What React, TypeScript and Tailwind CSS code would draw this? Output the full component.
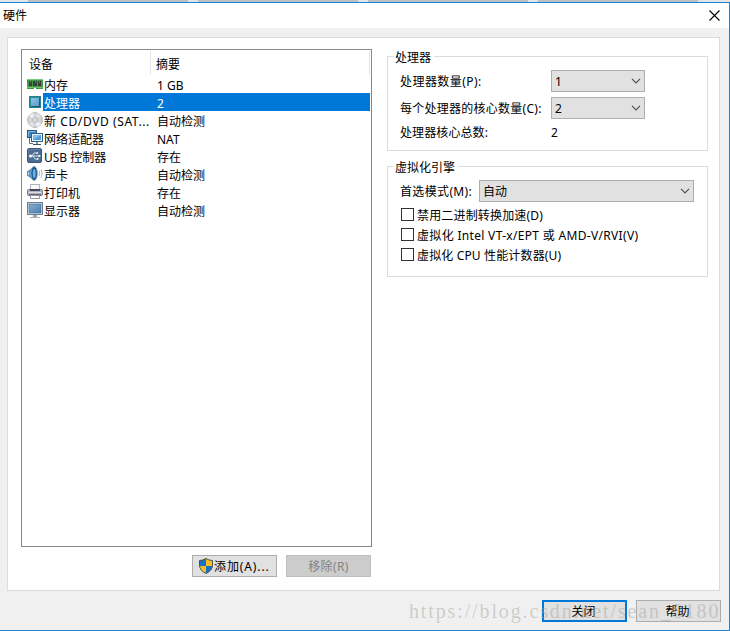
import { useState, type ReactNode } from 'react';

type Device = { name: string; summary: string; icon: ReactNode; className?: string };

// ─── Device icons ───────────────────────────────────────
const MemoryIcon = () => (
  <svg width="16" height="16" viewBox="0 0 16 16" shapeRendering="crispEdges">
    <rect x="0" y="3" width="16" height="10" fill="#3f9a45" />
    <rect x="0" y="3" width="16" height="1" fill="#7cc77f" />
    <rect x="2" y="5" width="3" height="5" fill="#33413a" />
    <rect x="6" y="5" width="4" height="5" fill="#33413a" />
    <rect x="11" y="5" width="3" height="5" fill="#33413a" />
    <path d="M3.500 5v2M8.500 5v2M12.500 5v2" stroke="#66756c" strokeWidth="1" />
    <rect x="0" y="11" width="16" height="1" fill="#7cbf70" />
    <rect x="7" y="12" width="2" height="1" fill="#ffffff" />
  </svg>
);

const CpuIcon = () => (
  <svg width="16" height="16" viewBox="0 0 16 16">
    <defs>
      <linearGradient id="cpu" x2="1" y2="1">
        <stop stopColor="#8fc4ea" />
        <stop offset="1" stopColor="#569dcc" />
      </linearGradient>
    </defs>
    <rect x="2" y="2" width="12" height="12" fill="#2b8a98" />
    <rect x="2.500" y="2.500" width="11" height="11" fill="none" stroke="#217989" strokeDasharray="1 1" />
    <rect x="4" y="4" width="8" height="8" fill="url(#cpu)" />
    <path d="M4 12.500h8.500V4" fill="none" stroke="#175d73" />
  </svg>
);

const DiscIcon = () => (
  <svg width="16" height="16" viewBox="0 0 16 16">
    <circle cx="8" cy="8" r="7.400" fill="#d5d6d9" stroke="#a4a6aa" strokeWidth=".8" />
    <path d="M8 8 2 4a7 7 0 0 1 4-3zM8 8l6 4a7 7 0 0 1-4 3z" fill="#eff0f1" />
    <path d="M8 8 10 1a7 7 0 0 1 4 3zM8 8l-2 7a7 7 0 0 1-4-3z" fill="#dfe0e2" />
    <circle cx="8" cy="8" r="2.700" fill="#eceeef" stroke="#a9acb1" strokeWidth=".8" />
    <circle cx="8" cy="8" r="1.200" fill="#fff" stroke="#8d9197" strokeWidth=".5" />
  </svg>
);

const NetworkIcon = () => (
  <svg width="16" height="16" viewBox="0 0 16 16">
    <path d="M2.500 8v5.500H6" fill="none" stroke="#5c6c7a" />
    <rect x=".5" y=".5" width="9" height="7" fill="#4285bd" stroke="#28577f" />
    <path d="M1.500 6.500v-5h7" fill="none" stroke="#7ebae3" />
    <rect x="4.500" y="3.500" width="11" height="8" fill="#e4f1fb" stroke="#2f5f8b" />
    <rect x="6" y="5" width="8" height="5" fill="#4f9bd8" />
    <path d="M6 10V5h8z" fill="#82bbe6" />
    <path d="M10 12v2M6 14.500h8" stroke="#384d60" strokeWidth="1.200" />
  </svg>
);

const UsbIcon = () => (
  <svg width="16" height="16" viewBox="0 0 16 16">
    <rect x=".5" y=".5" width="14" height="14" rx="1.500" fill="#4c6d91" stroke="#395879" />
    <path d="M1.500 7V1.500h12" fill="none" stroke="#627f9f" />
    <path d="M3 8h9M5 8l2-3h3M6 8l2 3h3" fill="none" stroke="#e9eff5" strokeWidth=".9" />
    <circle cx="3.500" cy="8" r="1.500" fill="#fff" />
    <path d="M11.500 6.500v3L14 8zM9.500 4.200H11v1.500H9.500zM10 10.200h1.500v1.500H10z" fill="#fff" />
  </svg>
);

const SoundIcon = () => (
  <svg width="16" height="16" viewBox="0 0 16 16">
    <path d="M.5 5.500 3 4l4-3.500v14L3 11 .5 9.500z" fill="#5e95c3" stroke="#356690" strokeWidth=".7" />
    <ellipse cx="7.200" cy="7.500" rx="3.200" ry="7" fill="#1b5288" stroke="#8babc6" strokeWidth=".8" />
    <ellipse cx="7.200" cy="7.500" rx="1.500" ry="4.500" fill="#63b6e6" />
    <path d="M1.500 6v3" stroke="#b2d8f1" />
    <path d="M12 5q1.500 2.500 0 5M14 3.500q2.200 4 0 8" fill="none" stroke="#a4b7c6" />
  </svg>
);

const PrinterIcon = () => (
  <svg width="16" height="16" viewBox="0 0 16 16">
    <rect x="3.500" y=".5" width="9" height="7" fill="#f8f9fb" stroke="#b0b4bd" />
    <rect x=".5" y="5.500" width="15" height="6" rx="1" fill="#b0b2bf" stroke="#74778a" />
    <path d="M3 5h10v2H3z" fill="#45495b" />
    <path d="M1.500 8.500h13" stroke="#d9dae1" />
    <path d="M2 10.500h12" stroke="#62657a" />
    <path d="M3.500 11.500h9v3h-9z" fill="#fff" stroke="#9396a3" />
  </svg>
);

const DisplayIcon = () => (
  <svg width="16" height="16" viewBox="0 0 16 16">
    <defs>
      <linearGradient id="screen" x2="1" y2="1">
        <stop stopColor="#88adcd" />
        <stop offset="1" stopColor="#4c7faf" />
      </linearGradient>
    </defs>
    <rect x=".5" y=".5" width="15" height="12" fill="#dce5ee" stroke="#6b8196" />
    <rect x="2" y="2" width="12" height="9" fill="url(#screen)" stroke="#426b91" strokeWidth=".6" />
    <path d="M6 13h4v2H6z" fill="#94a2ae" />
    <path d="M3 15.500h10" stroke="#a8b3bc" />
  </svg>
);

const ShieldIcon = () => (
  <svg width="16" height="16" viewBox="0 0 16 16" className="shrink-0">
    <path d="M8 .5Q5 2.500 1.500 2.500V7q0 5.500 6.500 8.500 6.500-3 6.500-8.500V2.500Q11 2.500 8 .5z" fill="#fbbc22" />
    <path d="M8 .5Q5 2.500 1.500 2.500V8H8zM8 8h6.400Q13.500 13 8 15.500z" fill="#1672c9" />
    <path d="M8 .5Q5 2.500 1.500 2.500V7q0 5.500 6.500 8.500 6.500-3 6.500-8.500V2.500Q11 2.500 8 .5z" fill="none" stroke="#4a5055" />
  </svg>
);

const Chevron = () => (
  <svg width="10" height="6" viewBox="0 0 10 6" className="mr-[3px] shrink-0">
    <path d="m1 .8 4 4 4-4" fill="none" stroke="#505050" strokeWidth="1.200" />
  </svg>
);

const DEVICES: Device[] = [
  { name: '内存', summary: '1 GB', icon: <MemoryIcon /> },
  { name: '处理器', summary: '2', icon: <CpuIcon /> },
  { name: '新 CD/DVD (SAT...', summary: '自动检测', icon: <DiscIcon />, className: 'tracking-[0.6px]' },
  { name: '网络适配器', summary: 'NAT', icon: <NetworkIcon /> },
  { name: 'USB 控制器', summary: '存在', icon: <UsbIcon /> },
  { name: '声卡', summary: '自动检测', icon: <SoundIcon /> },
  { name: '打印机', summary: '存在', icon: <PrinterIcon /> },
  { name: '显示器', summary: '自动检测', icon: <DisplayIcon /> },
];

const OPTIONS = [
  { label: '禁用二进制转换加速(D)', className: 'tracking-[0.17px]' },
  { label: '虚拟化 Intel VT-x/EPT 或 AMD-V/RVI(V)', className: 'tracking-[0.32px]' },
  { label: '虚拟化 CPU 性能计数器(U)', className: 'tracking-[0.15px]' },
];

function Select({ value, className }: { value: string; className: string }) {
  return (
    <button className={`flex h-[22px] items-center justify-between border border-[#adadad] bg-[#e1e1e1] pl-[3px] ${className}`}>
      <span className="pt-[2px]">{value}</span>
      <Chevron />
    </button>
  );
}

function Group({ title, className, children }: { title: string; className: string; children: ReactNode }) {
  return (
    <section className={`w-[321px] border border-[#dcdcdc] ${className}`}>
      <h2 className="-mt-[9px] ml-[6px] h-[18px] w-fit bg-white pr-[3px] pl-px leading-[20px]">{title}</h2>
      {children}
    </section>
  );
}

export default function App() {
  const [selected, setSelected] = useState(1);
  const [checked, setChecked] = useState([false, false, false]);

  const toggle = (index: number) => {
    setChecked((prev) => prev.map((value, i) => (i === index ? !value : value)));
  };

  return (
    <div className="relative flex h-[631px] w-[730px] flex-col overflow-hidden bg-[#f0f0f0] font-['Noto_Sans','Noto_Sans_CJK_SC',sans-serif] text-[12px] leading-[18px] text-black">
      {/* Edge of the window behind */}
      <div className="flex h-[2px] shrink-0 gap-[10px] bg-[#e4e4e4] pl-[28px]">
        <div className="w-[160px] bg-[#c0c0c0]" />
        <div className="w-[160px] bg-[#c0c0c0]" />
        <div className="w-[160px] bg-[#c0c0c0]" />
        <div className="w-[160px] bg-[#c0c0c0]" />
      </div>

      <div className="flex min-h-0 flex-1 flex-col border-y border-r border-[#1883d7]">
        {/* Title bar */}
        <header className="flex h-[25px] shrink-0 items-center justify-between bg-white pr-[9px] pl-[3px]">
          <h1>硬件</h1>
          <button aria-label="关闭窗口">
            <svg width="11" height="11" viewBox="0 0 11 11">
              <path d="m.5.5 10 10m0-10-10 10" stroke="#000" strokeWidth="1.100" />
            </svg>
          </button>
        </header>

        <main className="mt-[9px] ml-[7px] flex h-[554px] w-[713px] shrink-0 border border-[#dcdcdc] bg-white pt-[11px] pl-[13px]">
          {/* Device list */}
          <div className="w-[351px]">
            <div className="h-[498px] border border-[#828790] p-px pt-0">
              <div className="flex h-[25px] pt-px">
                <span className="w-[128px] border-r border-[#e5e5e5] pt-[5px] pl-[6px]">设备</span>
                <span className="flex-1 border-r border-[#e5e5e5] pt-[5px] pl-[5px]">摘要</span>
              </div>
              {DEVICES.map((device, index) => (
                <div key={device.name} onClick={() => setSelected(index)} className="flex h-[18px]">
                  <span className="w-[20px] shrink-0 pt-px pl-[4px]">{device.icon}</span>
                  <div
                    className={`flex flex-1 pl-px leading-[21px] whitespace-nowrap ${index === selected ? 'bg-[#0078d7] text-white' : ''}`}
                  >
                    <span className={`w-[113px] ${device.className ?? ''}`}>{device.name}</span>
                    <span>{device.summary}</span>
                  </div>
                </div>
              ))}
            </div>
            <div className="mt-[8px] mr-px flex justify-end gap-[9px]">
              <button className="flex h-[22px] w-[85px] items-center border border-[#adadad] bg-[#e1e1e1] pl-[5px]">
                <ShieldIcon />
                <span className="pt-[2px] tracking-[0.9px]">添加(A)...</span>
              </button>
              <button disabled className="h-[22px] w-[85px] border border-[#bfbfbf] bg-[#cccccc] tracking-[0.4px] text-[#838383]">
                <span className="block leading-[22px]">移除(R)</span>
              </button>
            </div>
          </div>

          {/* Processor settings */}
          <div className="ml-[15px] pt-[7px]">
            <Group title="处理器" className="h-[95px]">
              <div className="flex flex-col pl-[12px]">
                <div className="mt-[4px] flex items-center">
                  <span className="w-[151px] pt-px tracking-[0.45px]">处理器数量(P):</span>
                  <Select value="1" className="w-[94px]" />
                </div>
                <div className="mt-[5px] flex items-center">
                  <span className="w-[151px] pt-px tracking-[0.26px] whitespace-nowrap">每个处理器的核心数量(C):</span>
                  <Select value="2" className="w-[94px]" />
                </div>
                <div className="mt-[5px] flex items-center">
                  <span className="w-[151px] tracking-[0.1px]">处理器核心总数:</span>
                  <span>2</span>
                </div>
              </div>
            </Group>

            <Group title="虚拟化引擎" className="mt-[15px] h-[111px]">
              <div className="flex flex-col pl-[12px]">
                <div className="mt-[4px] flex items-center">
                  <span className="w-[79px] pt-px tracking-[0.35px]">首选模式(M):</span>
                  <Select value="自动" className="w-[215px]" />
                </div>
                <div className="mt-[3px] ml-px">
                  {OPTIONS.map((option, index) => (
                    <label key={option.label} className="flex h-[20px] items-center gap-[3px]">
                      <input
                        type="checkbox"
                        checked={checked[index]}
                        onChange={() => toggle(index)}
                        className="mb-px size-[13px] appearance-none border border-[#333333] bg-white checked:bg-[#0078d7]"
                      />
                      <span className={`pt-[2px] whitespace-nowrap ${option.className}`}>{option.label}</span>
                    </label>
                  ))}
                </div>
              </div>
            </Group>
          </div>
        </main>

        <footer className="mt-[9px] flex justify-end gap-[9px] pr-[8px]">
          <button className="h-[22px] w-[85px] border-2 border-[#0078d7] bg-[#e1e1e1] pr-[2px] leading-[20px]">关闭</button>
          <button className="h-[22px] w-[85px] border border-[#adadad] bg-[#e1e1e1] pr-[2px] leading-[22px]">帮助</button>
        </footer>
      </div>

      {/* Watermark */}
      <span className="pointer-events-none absolute top-[599px] left-[409px] font-['Liberation_Serif',serif] text-[20px] leading-[24px] tracking-[1.87px] whitespace-nowrap text-[#a0a096]/45">
        https://blog.csdn.net/sean_8180
      </span>
    </div>
  );
}
